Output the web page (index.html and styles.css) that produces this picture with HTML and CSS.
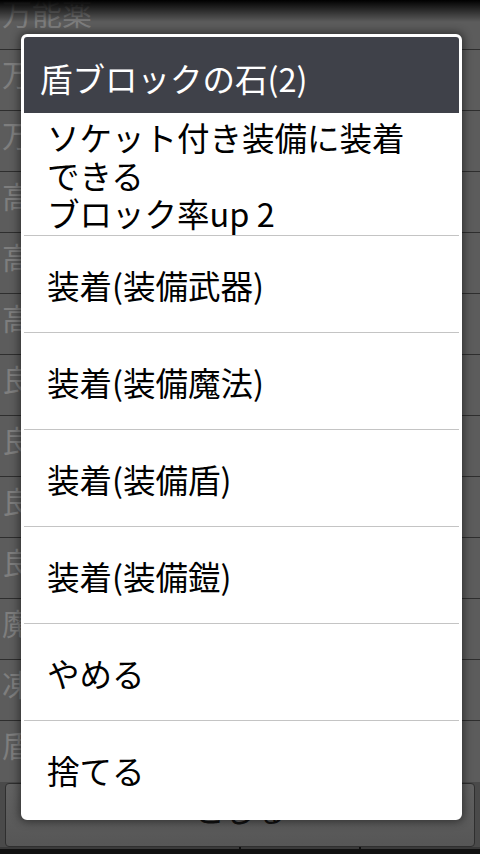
FILE: index.html
```html
<!DOCTYPE html>
<html lang="ja">
<head>
    <meta name="viewport" content="width=device-width, initial-scale=1.0">
    <title>アイテム</title>
    <link rel="stylesheet" href="styles.css">
</head>
<body>
    <div class="screen">
        <div class="item-list">
            <div class="row">万能薬</div>
            <div class="row">万能薬</div>
            <div class="row">万能薬</div>
            <div class="row">高級回復薬</div>
            <div class="row">高級魔力薬</div>
            <div class="row">高級解毒薬</div>
            <div class="row">良質な回復薬</div>
            <div class="row">良質な魔力薬</div>
            <div class="row">良質な解毒薬</div>
            <div class="row">良質な薬草</div>
            <div class="row">魔法の石</div>
            <div class="row">凍結の石</div>
            <div class="row">盾ブロックの石</div>
        </div>
        <div class="bottom-bar">
            <button class="big-btn">とじる</button>
            <div class="btn-strip">
                <span></span><span></span><span></span>
            </div>
        </div>
        <div class="top-shade"></div>

        <div class="dialog">
            <div class="dlg-title">盾ブロックの石(2)</div>
            <div class="dlg-desc">ソケット付き装備に装着<br>できる<br>ブロック率up 2</div>
            <div class="dlg-item">装着(装備武器)</div>
            <div class="dlg-item">装着(装備魔法)</div>
            <div class="dlg-item">装着(装備盾)</div>
            <div class="dlg-item">装着(装備鎧)</div>
            <div class="dlg-item">やめる</div>
            <div class="dlg-item">捨てる</div>
        </div>
    </div>
</body>
</html>
```

FILE: styles.css
```css
* {
    margin: 0;
    padding: 0;
    box-sizing: border-box;
    font-family: "Noto Sans CJK JP", "Noto Sans", sans-serif;
}

body {
    background-color: #000;
}

.screen {
    position: relative;
    width: 480px;
    height: 854px;
    overflow: hidden;
    background-color: #5c5c5c;
    display: flex;
    flex-direction: column;
}

.item-list {
    margin-top: -11px;
}

.row {
    height: 61px;
    padding: 6px 0 0 2px;
    border-bottom: 1px solid #2e2e2e;
    font-size: 30px;
    line-height: 34px;
    color: #7e7e7e;
    white-space: nowrap;
    overflow: hidden;
}

.row:last-child {
    border-bottom: none;
}

.bottom-bar {
    flex: 1;
    padding: 1px 5px 0 5px;
    background-color: #4a4a4a;
    display: flex;
    flex-direction: column;
}

.big-btn {
    height: 64px;
    border: 1px solid #2f2f2f;
    border-radius: 4px;
    background: linear-gradient(#626262, #565656);
    font-size: 31px;
    line-height: 38px;
    color: #111;
    text-align: center;
    padding-bottom: 12px;
}

.btn-strip {
    flex: 1;
    display: flex;
    gap: 2px;
    margin: 0 -5px;
    background-color: #111;
}

.btn-strip span {
    border-top: 2px solid #3a3a3a;
}

.btn-strip span:nth-child(1) { width: 239px; }
.btn-strip span:nth-child(2) { width: 118px; }
.btn-strip span:nth-child(3) { flex: 1; }

.top-shade {
    position: absolute;
    top: 0;
    left: 0;
    right: 0;
    height: 22px;
    background: linear-gradient(#000, rgba(0, 0, 0, 0));
}

.dialog {
    position: absolute;
    top: 34px;
    left: 21px;
    width: 441px;
    border: 3px solid #fff;
    border-radius: 6px;
    background-color: #fff;
    box-shadow: 0 0 8px 2px rgba(0, 0, 0, 0.45);
    overflow: hidden;
}

.dlg-title {
    height: 76px;
    padding: 4px 0 0 16px;
    display: flex;
    align-items: center;
    background-color: rgba(48, 51, 59, 0.93);
    color: #fff;
    font-size: 32.5px;
    white-space: nowrap;
}

.dlg-desc {
    height: 123px;
    padding: 5px 0 0 23px;
    border-bottom: 1px solid #c4c4c4;
    font-size: 32.5px;
    line-height: 38px;
    color: #000;
    white-space: nowrap;
}

.dlg-item {
    height: 97px;
    padding-left: 23px;
    display: flex;
    align-items: center;
    border-bottom: 1px solid #c4c4c4;
    font-size: 32.5px;
    color: #000;
}

.dlg-item:last-child {
    height: 96px;
    border-bottom: none;
}
```
